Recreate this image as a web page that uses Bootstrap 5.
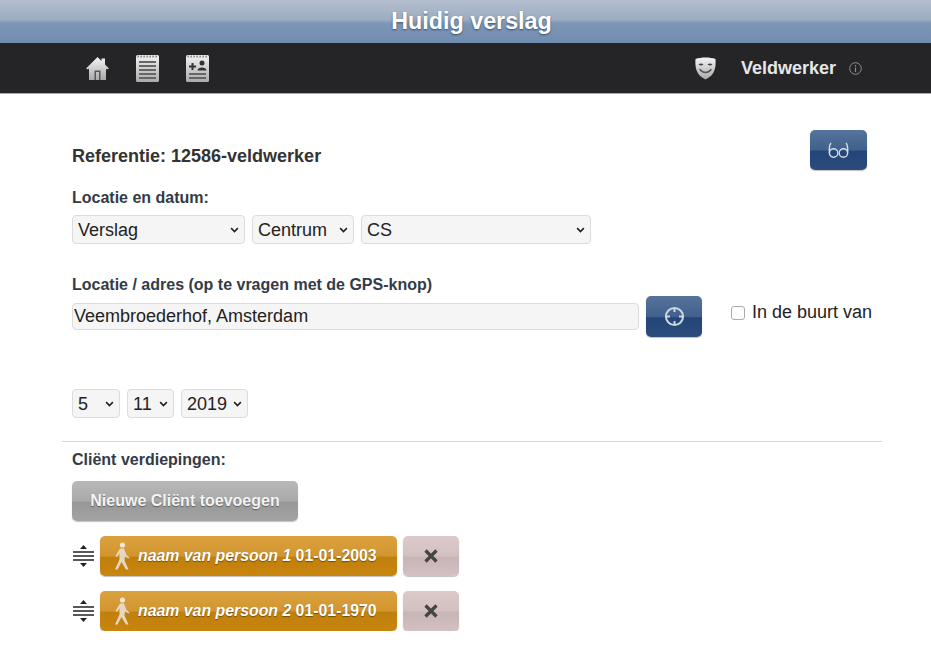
<!DOCTYPE html>
<html lang="nl">
<head>
  <meta charset="UTF-8">
  <title>Huidig verslag</title>
  <meta name="viewport" content="width=device-width, initial-scale=1">
  <link href="https://cdn.jsdelivr.net/npm/bootstrap@5.3.0/dist/css/bootstrap.min.css" rel="stylesheet">
  <style>
    body { font-family: "Liberation Sans", Arial, sans-serif; background: #fff; color: #222; }
    .kop {
      height: 43px; line-height: 42px; text-align: center; color: #fff; padding-left: 12px;
      font-size: 23.3px; font-weight: bold; text-shadow: 0 1px 2px rgba(30,50,80,.7);
      background: linear-gradient(#b4bfce 0%, #9dacc1 45%, #7d96b5 55%, #708cb0 100%);
    }
    .balk { height: 51px; background: #252527; border-bottom: 1px solid #a8a8a8; color: #e6e6e6; padding: 0 69px 0 86px; }
    .balk-links { gap: 27px; }
    .naam { font-size: 18px; font-weight: bold; margin-left: 25px; margin-right: 13px; }
    .inhoud { width: 820px; margin-left: 62px; }
    .blok { padding: 36px 15px 0 10px; }
    .titel { font-size: 18px; font-weight: bold; color: #333; }
    .veldnaam { display: block; font-size: 16px; line-height: 20px; font-weight: bold; color: #333b47; margin-bottom: 7px; white-space: nowrap; }
    .keuze {
      height: 29px; padding: 1px 20px 0 5px; font-size: 18px; line-height: 27px; color: #222;
      background-color: #f5f5f5; border: 1px solid #dcdcdc; border-radius: 4px;
      background-image: url("data:image/svg+xml,%3csvg xmlns='http://www.w3.org/2000/svg' viewBox='0 0 12 8'%3e%3cpath fill='none' stroke='%23222' stroke-width='2.2' d='M1.5 1.5 6 6l4.5-4.5'/%3e%3c/svg%3e");
      background-position: right 5px center; background-size: 9px 6px;
    }
    .k-verslag { width: 173px; } .k-centrum { width: 102px; } .k-cs { width: 230px; }
    .k-dag { width: 48px; } .k-maand { width: 47px; } .k-jaar { width: 67px; }
    .tekstveld {
      width: 567px; height: 27px; padding: 0 1px; font-size: 18px; color: #222;
      background: #f5f5f5; border: 1px solid #dcdcdc; border-radius: 4px;
    }
    .tekstveld:focus { background: #f5f5f5; box-shadow: none; }
    .knop { padding: 0; border: 0; border-radius: 5px; height: 40px; display: flex; align-items: center; justify-content: center; box-shadow: 0 1px 1px rgba(0,0,0,.25); }
    .knop-blauw { width: 57px; background: linear-gradient(#56749b 0%, #3f618c 50%, #234578 53%, #2b4c7c 100%); }
    .knop-grijs {
      width: 226px; color: #f4f4f4; font-size: 16px; font-weight: bold; text-shadow: 0 1px 1px rgba(0,0,0,.4);
      background: linear-gradient(#b9b9b9 0%, #a9a9a9 50%, #989898 53%, #a3a3a3 100%);
    }
    .knop-oranje {
      width: 297px; color: #fff; font-size: 15.85px; font-weight: bold; text-shadow: 0 1px 1px rgba(0,0,0,.4); justify-content: flex-start; padding-left: 13px;
      background: linear-gradient(#dba23e 0%, #d29530 50%, #c17f0c 53%, #c8860f 100%);
    }
    .knop-oranje svg { margin-right: 7px; }
    .knop-roze { width: 56px; background: linear-gradient(#dccaca 0%, #d3c0c1 50%, #c8b5b7 53%, #d2c0c2 100%); }
    .buurt { font-size: 18px; color: #222; white-space: nowrap; }
    .buurt .form-check-input { width: 14px; height: 14px; margin: 0 7px 0 0; border: 1px solid #aaa; border-radius: 3px; }
    .scheiding { margin: 23px 0 8px; border: 0; border-top: 1px solid #d8d8d8; opacity: 1; }
    .persoon { margin-top: 15px; gap: 6px; }
    .sleep { margin-right: -1px; }
  </style>
</head>
<body>
  <div class="kop">Huidig verslag</div>

  <nav class="balk d-flex align-items-center justify-content-between">
    <div class="balk-links d-flex align-items-center">
      <svg width="23" height="26" viewBox="0 0 23 26">
        <defs><linearGradient id="grijsverloop" x1="0" y1="0" x2="0" y2="1"><stop offset="0" stop-color="#f4f4f4"/><stop offset="1" stop-color="#a9a9a9"/></linearGradient></defs>
        <path d="M0 13.5 11.5 2 15.5 6V3.5H19V9.5L23 13.5 21 14.5 20 13.5V25H3V13.5L2 14.5Z" fill="url(#grijsverloop)"/>
        <path d="M8.5 25V15.5H14.5V25H13V17H10V25Z" fill="#55565a"/>
      </svg>
      <svg width="23" height="28" viewBox="0 0 23 28">
        <rect x="0" y="1" width="23" height="27" rx="1.5" fill="url(#grijsverloop)"/>
        <path d="M1.5 2.5H21.5" stroke="#666" stroke-width="2" stroke-dasharray="1.2 1.8"/>
        <path d="M3 8H20M3 12H20M3 16H20M3 20H20M3 24H20" stroke="#666" stroke-width="2"/>
      </svg>
      <svg width="23" height="28" viewBox="0 0 23 28">
        <rect x="0" y="1" width="23" height="27" rx="1.5" fill="url(#grijsverloop)"/>
        <path d="M1.5 2.5H21.5" stroke="#666" stroke-width="2" stroke-dasharray="1.2 1.8"/>
        <path d="M3 12.5H10M6.5 9V16" stroke="#333" stroke-width="2"/>
        <circle cx="16" cy="9" r="2.5" fill="#333"/>
        <path d="M11.5 16.5C11.5 12.5 20.5 12.5 20.5 16.5Z" fill="#333"/>
        <path d="M3 20H20M3 24H20" stroke="#666" stroke-width="2"/>
      </svg>
    </div>
    <div class="d-flex align-items-center">
      <svg width="21" height="23" viewBox="0 0 21 23">
        <path d="M0.5 2C6 0 15 0 20.5 2 21 9 20.5 18 10.5 22.5 0.5 18 0 9 0.5 2Z" fill="url(#grijsverloop)"/>
        <path d="M3.5 7.5C5 6 7 6 8.5 7.5 7 8.8 5 8.8 3.5 7.5ZM12.5 7.5C14 6 16 6 17.5 7.5 16 8.8 14 8.8 12.5 7.5Z" fill="#444"/>
        <path d="M5 12.5C8 16.5 13 16.5 16 12.5" fill="none" stroke="#555" stroke-width="1.5" stroke-linecap="round"/>
      </svg>
      <span class="naam">Veldwerker</span>
      <svg width="13" height="13" viewBox="0 0 13 13">
        <circle cx="6.5" cy="6.5" r="5.8" fill="none" stroke="#8f8f8f"/>
        <path d="M6.5 3V4.4M6.5 5.6V10" stroke="#8f8f8f" stroke-width="1.2"/>
      </svg>
    </div>
  </nav>

  <main class="inhoud">
    <div class="blok">
      <div class="d-flex justify-content-between align-items-end" style="margin-bottom:18px">
        <div class="titel">Referentie: 12586-veldwerker</div>
        <button type="button" class="btn knop knop-blauw">
          <svg width="21" height="16" viewBox="0 0 21 16" fill="none" stroke="#d5dce6" stroke-width="1.4">
            <circle cx="5.6" cy="11" r="4.2"/><circle cx="15.4" cy="11" r="4.2"/>
            <path d="M1.4 11C1 6 1.4 3 3 1M19.6 11C20 6 19.6 3 18 1"/>
          </svg>
        </button>
      </div>

      <label class="veldnaam">Locatie en datum:</label>
      <div class="d-flex" style="gap:7px">
        <select class="form-select keuze k-verslag"><option>Verslag</option></select>
        <select class="form-select keuze k-centrum"><option>Centrum</option></select>
        <select class="form-select keuze k-cs"><option>CS</option></select>
      </div>

      <label class="veldnaam" style="margin-top:31px">Locatie / adres (op te vragen met de GPS-knop)</label>
      <div class="d-flex align-items-center" style="margin-top:-6px;height:41px">
        <input type="text" class="form-control tekstveld flex-shrink-0" value="Veembroederhof, Amsterdam">
        <button type="button" class="btn knop knop-blauw flex-shrink-0" style="height:41px;margin-left:7px;width:56px">
          <svg width="21" height="21" viewBox="0 0 21 21" fill="none" stroke="#cfd6e0" stroke-width="2">
            <circle cx="10.5" cy="10.5" r="8.6"/>
            <path d="M10.5 2V6M10.5 15V19M2 10.5H6M15 10.5H19"/>
          </svg>
        </button>
        <div class="form-check buurt d-flex align-items-center p-0 mb-0" style="margin-left:29px;margin-top:-8px">
          <input class="form-check-input" type="checkbox" id="buurt">
          <label class="form-check-label" for="buurt">In de buurt van</label>
        </div>
      </div>

      <div class="d-flex" style="gap:7px;margin-top:52px">
        <select class="form-select keuze k-dag"><option>5</option></select>
        <select class="form-select keuze k-maand"><option>11</option></select>
        <select class="form-select keuze k-jaar"><option>2019</option></select>
      </div>
    </div>

    <hr class="scheiding">

    <div class="blok pt-0">
      <label class="veldnaam" style="margin-bottom:11px">Cliënt verdiepingen:</label>
      <button type="button" class="btn knop knop-grijs">Nieuwe Cliënt toevoegen</button>

      <div class="persoon d-flex align-items-center">
        <svg class="sleep" width="23" height="24" viewBox="0 0 23 24">
          <path d="M11.5 1 15 5H8ZM11.5 23 15 19H8Z" fill="#222"/>
          <path d="M1 8H22M1 12H22M1 16H22" stroke="#222" stroke-width="1.5"/>
        </svg>
        <button type="button" class="btn knop knop-oranje">
          <svg width="18" height="28" viewBox="0 0 18 28">
            <circle cx="9.5" cy="3" r="2.6" fill="#efe6d6"/>
            <path d="M7 6.5H11L13.5 13 16.5 15.5 15.5 16.5 12 14.5 11.5 18.5 15.5 27.5H13L8.5 20 4.5 27.5H2L6.5 17.5 6.5 11 4 15 2.5 14Z" fill="#e6d8c0"/>
          </svg>
          <span><em>naam van persoon 1</em> 01-01-2003</span>
        </button>
        <button type="button" class="btn knop knop-roze">
          <svg width="14" height="14" viewBox="0 0 14 14"><path d="M1.5 1.5 12.5 12.5M12.5 1.5 1.5 12.5" stroke="#444" stroke-width="3.2"/></svg>
        </button>
      </div>

      <div class="persoon d-flex align-items-center">
        <svg class="sleep" width="23" height="24" viewBox="0 0 23 24">
          <path d="M11.5 1 15 5H8ZM11.5 23 15 19H8Z" fill="#222"/>
          <path d="M1 8H22M1 12H22M1 16H22" stroke="#222" stroke-width="1.5"/>
        </svg>
        <button type="button" class="btn knop knop-oranje">
          <svg width="18" height="28" viewBox="0 0 18 28">
            <circle cx="9.5" cy="3" r="2.6" fill="#efe6d6"/>
            <path d="M7 6.5H11L13.5 13 16.5 15.5 15.5 16.5 12 14.5 11.5 18.5 15.5 27.5H13L8.5 20 4.5 27.5H2L6.5 17.5 6.5 11 4 15 2.5 14Z" fill="#e6d8c0"/>
          </svg>
          <span><em>naam van persoon 2</em> 01-01-1970</span>
        </button>
        <button type="button" class="btn knop knop-roze">
          <svg width="14" height="14" viewBox="0 0 14 14"><path d="M1.5 1.5 12.5 12.5M12.5 1.5 1.5 12.5" stroke="#444" stroke-width="3.2"/></svg>
        </button>
      </div>
    </div>
  </main>

  <script src="https://cdn.jsdelivr.net/npm/bootstrap@5.3.0/dist/js/bootstrap.bundle.min.js"></script>
</body>
</html>
